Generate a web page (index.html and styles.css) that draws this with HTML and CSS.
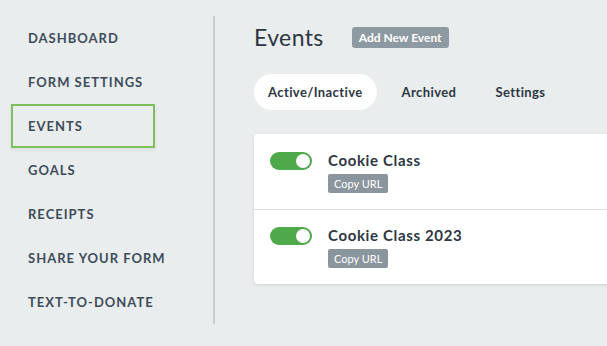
FILE: index.html
```html
<!DOCTYPE html>
<html>
<head>
<meta charset="utf-8">
<link rel="stylesheet" href="styles.css">
</head>
<body>
<div class="app">
  <nav class="sidebar">
    <a class="nav-item">DASHBOARD</a>
    <a class="nav-item">FORM SETTINGS</a>
    <a class="nav-item active">EVENTS</a>
    <a class="nav-item">GOALS</a>
    <a class="nav-item">RECEIPTS</a>
    <a class="nav-item">SHARE YOUR FORM</a>
    <a class="nav-item">TEXT-TO-DONATE</a>
  </nav>
  <main class="main">
    <div class="header">
      <h1 class="title">Events</h1>
      <button class="btn-add">Add New Event</button>
    </div>
    <div class="tabs">
      <span class="tab selected">Active/Inactive</span>
      <span class="tab">Archived</span>
      <span class="tab">Settings</span>
    </div>
    <div class="card">
      <div class="row">
        <span class="toggle"><span class="knob"></span></span>
        <div class="info">
          <div class="name">Cookie Class</div>
          <span class="badge">Copy URL</span>
        </div>
      </div>
      <div class="row">
        <span class="toggle"><span class="knob"></span></span>
        <div class="info">
          <div class="name">Cookie Class 2023</div>
          <span class="badge">Copy URL</span>
        </div>
      </div>
    </div>
  </main>
</div>
</body>
</html>
```

FILE: styles.css
```css
html, body {
  margin: 0;
  padding: 0;
  background: #e9edee;
  overflow: hidden;
  font-family: "Lato", "Liberation Sans", sans-serif;
}
.app {
  display: flex;
  align-items: flex-start;
  width: 607px;
  height: 346px;
  overflow: hidden;
}
.sidebar {
  margin-top: 16px;
  width: 213px;
  flex: none;
  border-right: 2px solid #c9cdd0;
  display: flex;
  flex-direction: column;
}
.nav-item {
  display: flex;
  align-items: center;
  box-sizing: border-box;
  height: 44px;
  width: 144px;
  margin-left: 11px;
  padding-left: 15px;
  border: 2px solid transparent;
  font-size: 13px;
  font-weight: 700;
  letter-spacing: 1px;
  color: #3e4c5a;
  white-space: nowrap;
}
.nav-item.active {
  border-color: #7cbf5c;
  box-shadow: 0 2px 4px rgba(0,0,0,0.08);
}
.main {
  flex: none;
  padding-left: 39px;
  padding-top: 24px;
}
.header {
  display: flex;
  align-items: center;
  gap: 28px;
}
.title {
  margin: 0;
  font-size: 23px;
  font-weight: 400;
  letter-spacing: 0.4px;
  color: #2c3642;
  line-height: 26px;
}
.btn-add {
  border: none;
  border-radius: 3px;
  background: #8e9aa2;
  color: #fff;
  font-family: inherit;
  font-size: 12px;
  font-weight: 700;
  height: 21px;
  padding: 0 7px;
}
.tabs {
  display: flex;
  align-items: center;
  margin-top: 24px;
}
.tab {
  height: 36px;
  display: flex;
  align-items: center;
  padding: 0 14px;
  border-radius: 18px;
  font-size: 13px;
  font-weight: 700;
  letter-spacing: 0.4px;
  color: #2c3642;
  margin-right: 11px;
}
.tab.selected {
  background: #fff;
}
.card {
  margin-top: 24px;
  width: 420px;
  background: #fff;
  border-radius: 4px;
  box-shadow: 0 1px 3px rgba(0,0,0,0.12);
}
.row {
  display: flex;
  align-items: flex-start;
  gap: 16px;
  height: 75px;
  box-sizing: border-box;
  padding: 18px 16px 0;
}
.row + .row {
  border-top: 1px solid #dcdfe1;
  padding-top: 17px;
}
.toggle {
  position: relative;
  width: 42px;
  height: 18px;
  border-radius: 9px;
  background: #4ea94b;
  flex: none;
}
.knob {
  position: absolute;
  right: 2px;
  top: 2px;
  width: 14px;
  height: 14px;
  border-radius: 50%;
  background: #fff;
}
.info {
  display: flex;
  flex-direction: column;
  align-items: flex-start;
  margin-top: -2px;
}
.name {
  font-size: 15px;
  font-weight: 700;
  color: #2c3642;
  line-height: 20px;
  letter-spacing: 0.65px;
}
.badge {
  margin-top: 4px;
  height: 19px;
  display: flex;
  align-items: center;
  padding: 0 6px;
  border-radius: 2px;
  background: #8a959d;
  color: #fff;
  font-size: 11px;
}
```
